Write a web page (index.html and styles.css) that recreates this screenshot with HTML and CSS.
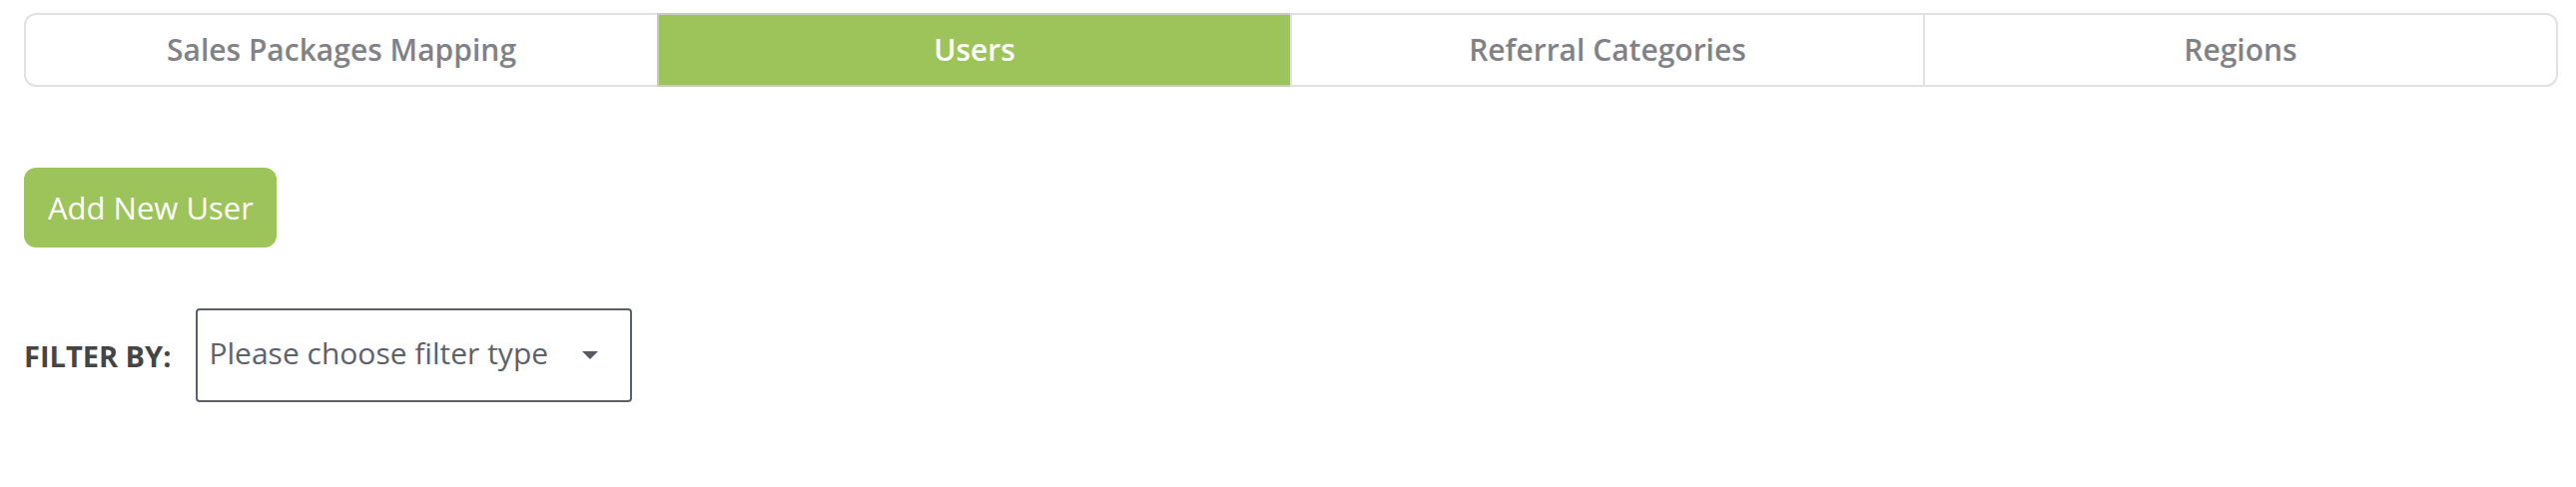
FILE: index.html
```html
<!doctype html>
<html lang="en">
  <head>
    <meta charset="UTF-8" />
    <title>Users</title>
    <link rel="stylesheet" href="styles.css">
  </head>
  <body>
    <nav class="tabs">
      <a class="tab" href="#">Sales Packages Mapping</a>
      <a class="tab active" href="#">Users</a>
      <a class="tab" href="#">Referral Categories</a>
      <a class="tab" href="#">Regions</a>
    </nav>

    <button class="add-btn">Add New User</button>

    <div class="filter-row">
      <label class="filter-label">FILTER BY:</label>
      <div class="dropdown">
        <span class="dropdown-text">Please choose filter type</span>
        <svg class="dropdown-caret" width="16" height="8" viewBox="0 0 16 8">
          <path d="M0 0 L16 0 L8 8 Z" fill="#555a64" />
        </svg>
      </div>
    </div>
  </body>
</html>
```

FILE: styles.css
```css
body {
  margin: 0;
  padding: 13px 18px 0 24px;
  font-family: 'Open Sans', 'Noto Sans', sans-serif;
  background-color: #fff;
}

.tabs {
  display: flex;
  height: 74px;
}

.tab {
  flex: 1;
  display: block;
  text-align: center;
  text-decoration: none;
  font-size: 30px;
  font-weight: 600;
  line-height: 70px;
  color: #808288;
  border-top: 2px solid #e1e1e1;
  border-bottom: 2px solid #e1e1e1;
  border-left: 2px solid #e1e1e1;
}

.tab:first-child {
  border-radius: 12px 0 0 12px;
}

.tab:last-child {
  border-right: 2px solid #e1e1e1;
  border-radius: 0 12px 12px 0;
}

.tab.active {
  background-color: #9cc45b;
  border-color: #c8c8c8;
  color: #fff;
}

.add-btn {
  display: block;
  margin-top: 81px;
  height: 80px;
  padding: 0 23px 0 24px;
  border: none;
  border-radius: 12px;
  background-color: #9cc45b;
  color: #fff;
  font-family: 'Open Sans', 'Noto Sans', sans-serif;
  font-size: 31px;
  font-weight: 500;
  cursor: pointer;
}

.filter-row {
  display: flex;
  align-items: center;
  gap: 25px;
  margin-top: 61px;
}

.filter-label {
  font-size: 29px;
  font-weight: 700;
  color: #454545;
}

.dropdown {
  display: flex;
  align-items: center;
  justify-content: space-between;
  box-sizing: border-box;
  width: 437px;
  height: 94px;
  padding: 0 32px 0 11px;
  border: 2px solid #5a5f69;
  border-radius: 4px;
}

.dropdown-text {
  font-size: 30px;
  color: #5c616b;
  margin-top: -6px;
}

.dropdown-caret {
  display: block;
}
```
